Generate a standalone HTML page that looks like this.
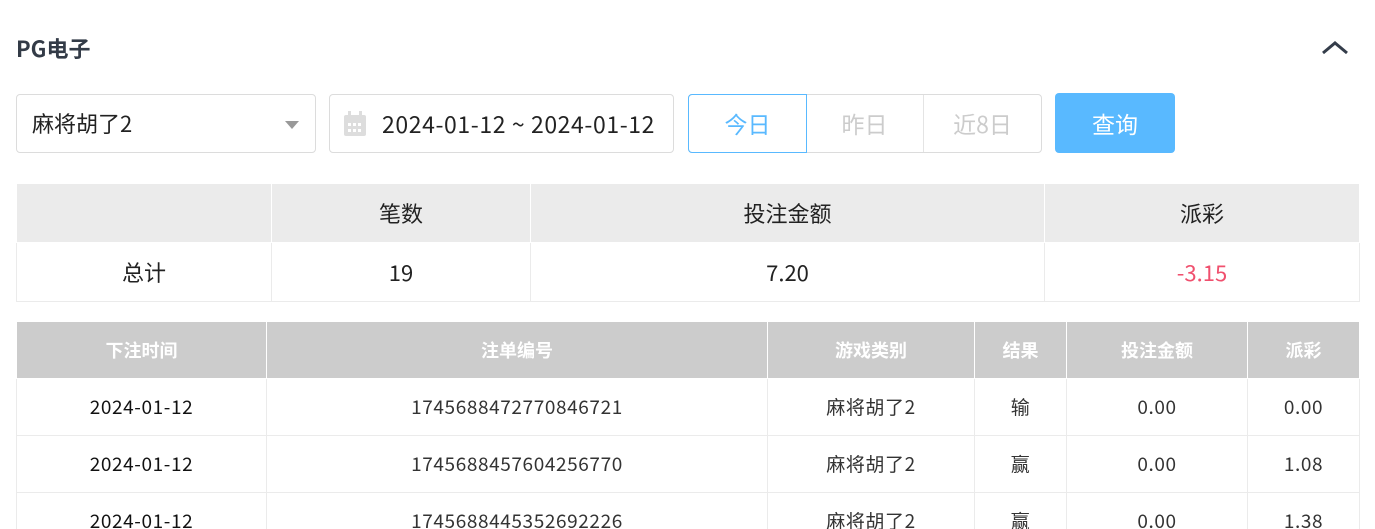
<!DOCTYPE html><html><head><meta charset="utf-8"><style>
*{box-sizing:border-box;margin:0;padding:0}
html,body{width:1375px;height:529px;overflow:hidden}
body{background:#fff;font-family:"Noto Sans CJK SC","Liberation Sans",sans-serif;color:#222;position:relative}
.a{position:absolute}
.title{left:16px;top:33px;font-size:22px;font-weight:bold;color:#333b47;line-height:30px}
.box{border:1px solid #dcdcdc;border-radius:4px;height:59px;top:94px}
table{border-collapse:collapse;position:absolute;left:16px;table-layout:fixed}
td{text-align:center;border:1px solid #ebebeb;line-height:24px}
.s td{height:59px;font-size:22px}
.m td{height:57px;font-size:19px;color:#333;letter-spacing:0.6px}
.m tr:first-child td{background:#ccc;color:#fff;font-weight:bold;border-color:#fff;font-size:18px;letter-spacing:0}
</style></head><body>
<div class="a title">PG电子</div>
<svg class="a" style="left:1321px;top:40px" width="28" height="16"><path d="M2 13 L14 3 L26 13" fill="none" stroke="#343d4a" stroke-width="3"/></svg>
<div class="a box" style="left:16px;width:300px"><span class="a" style="left:15px;top:13px;font-size:22px;line-height:30px">麻将胡了2</span><svg class="a" style="left:268px;top:26px" width="14" height="8"><path d="M0 0H14L7 8Z" fill="#999"/></svg></div>
<div class="a box" style="left:329px;width:345px"><svg class="a" style="left:13px;top:16px" width="24" height="26"><rect x="1" y="4" width="22" height="21" rx="2" fill="#ddd"/><rect x="5" y="0" width="3" height="7" fill="#ddd"/><rect x="16" y="0" width="3" height="7" fill="#ddd"/><g fill="#fff"><rect x="5" y="12" width="3" height="3"/><rect x="10" y="12" width="3" height="3"/><rect x="15" y="12" width="3" height="3"/><rect x="5" y="18" width="3" height="3"/><rect x="10" y="18" width="3" height="3"/><rect x="15" y="18" width="3" height="3"/></g></svg><span class="a" style="left:52px;top:13px;font-size:23px;line-height:30px;color:#222;white-space:nowrap;letter-spacing:0.6px">2024-01-12 ~ 2024-01-12</span></div>
<div class="a box" style="left:688px;width:354px"></div>
<div class="a" style="left:688px;top:94px;width:119px;height:59px;border:1px solid #59b9ff;border-radius:4px 0 0 4px;color:#59b9ff;font-size:23px;text-align:center;line-height:57px">今日</div>
<div class="a" style="left:806px;top:95px;width:118px;height:57px;border-right:1px solid #e4e4e4;color:#ccc;font-size:23px;text-align:center;line-height:57px">昨日</div>
<div class="a" style="left:924px;top:95px;width:117px;height:57px;color:#ccc;font-size:23px;text-align:center;line-height:57px">近8日</div>
<div class="a" style="left:1055px;top:93px;width:120px;height:60px;background:#59b9ff;border-radius:4px;color:#fff;font-size:23px;text-align:center;line-height:60px">查询</div>
<table class="s" style="top:183px;width:1344px"><colgroup><col style="width:255px"><col style="width:259px"><col style="width:514px"><col></colgroup>
<tr style="background:#ebebeb"><td style="border-color:#fff">&nbsp;</td><td style="border-color:#fff">笔数</td><td style="border-color:#fff">投注金额</td><td style="border-color:#fff">派彩</td></tr>
<tr><td>总计</td><td>19</td><td>7.20</td><td style="color:#f0506e">-3.15</td></tr></table>
<table class="m" style="top:321px;width:1344px"><colgroup><col style="width:250px"><col style="width:501px"><col style="width:207px"><col style="width:92px"><col style="width:181px"><col></colgroup>
<tr><td>下注时间</td><td>注单编号</td><td>游戏类别</td><td>结果</td><td>投注金额</td><td>派彩</td></tr>
<tr><td style="color:#111">2024-01-12</td><td>1745688472770846721</td><td>麻将胡了2</td><td>输</td><td>0.00</td><td>0.00</td></tr>
<tr><td style="color:#111">2024-01-12</td><td>1745688457604256770</td><td>麻将胡了2</td><td>赢</td><td>0.00</td><td>1.08</td></tr>
<tr><td style="color:#111">2024-01-12</td><td>1745688445352692226</td><td>麻将胡了2</td><td>赢</td><td>0.00</td><td>1.38</td></tr>
</table>
</body></html>
